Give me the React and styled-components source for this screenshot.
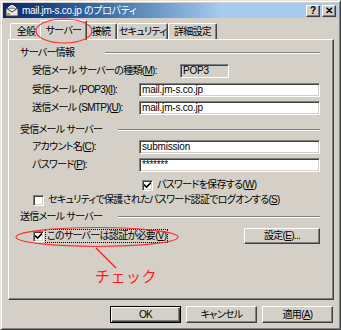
import React from "react";
import styled, { createGlobalStyle } from "styled-components";

const GlobalStyle = createGlobalStyle`
  html, body { margin: 0; padding: 0; background: #d4d0c8; }
  body {
    font-family: "Liberation Sans", "Noto Sans CJK JP", sans-serif;
    font-size: 10px;
    color: #000;
  }
`;

const Window = styled.div`
  position: relative;
  width: 341px;
  height: 330px;
  box-sizing: border-box;
  background: #d4d0c8;
  border: 1px solid;
  border-color: #e4e2dc #404040 #404040 #e4e2dc;
  box-shadow: inset 1px 1px 0 #fff, inset -1px -1px 0 #808080;
  padding: 2px;
  overflow: hidden;
  font-feature-settings: "palt" 1;
  letter-spacing: -0.7px;
`;

const TitleBar = styled.div`
  height: 15px;
  display: flex;
  align-items: center;
  padding: 0 2px;
  background: linear-gradient(90deg, #0a246a 0%, #3a6ea5 30%, #a6caf0 65%, #a6caf0 100%);
  color: #fff;
`;

const TitleText = styled.span`
  flex: 1;
  margin-left: 3px;
  line-height: 15px;
  letter-spacing: -0.3px;
  white-space: nowrap;
`;

const CapButton = styled.div`
  width: 12px;
  height: 10px;
  margin-left: ${(p) => p.$gap || 0}px;
  background: #d4d0c8;
  border: 1px solid;
  border-color: #fff #404040 #404040 #fff;
  box-shadow: inset -1px -1px 0 #808080;
  display: flex;
  align-items: center;
  justify-content: center;
  font-weight: bold;
  letter-spacing: 0;
  line-height: 10px;
  color: #000;
`;

const TabRow = styled.div`
  display: flex;
  align-items: flex-end;
  height: 21px;
  padding-left: 7px;
  position: relative;
  z-index: 2;
`;

const Tab = styled.div`
  position: relative;
  box-sizing: border-box;
  width: ${(p) => p.$w}px;
  height: ${(p) => (p.$active ? 20 : 16)}px;
  margin: 0 ${(p) => (p.$active ? -2 : 0)}px ${(p) => (p.$active ? -1 : 0)}px;
  z-index: ${(p) => (p.$active ? 2 : 1)};
  background: #d4d0c8;
  border-top: 1px solid #fff;
  border-left: 1px solid #fff;
  border-right: 1px solid #404040;
  border-radius: 2px 2px 0 0;
  box-shadow: inset -1px 0 0 #808080;
  display: flex;
  align-items: ${(p) => (p.$active ? "flex-start" : "center")};
  padding-top: ${(p) => (p.$active ? 3 : 0)}px;
  justify-content: center;
  line-height: 13px;
  white-space: nowrap;
`;

const Panel = styled.div`
  position: relative;
  margin: 0 4px 0 5px;
  height: 261px;
  box-sizing: border-box;
  border: 1px solid;
  border-color: #fff #404040 #404040 #fff;
  box-shadow: inset -1px -1px 0 #808080;
  padding: 0 0 0 11px;
  display: flex;
  flex-direction: column;
`;

const SectionHead = styled.div`
  display: flex;
  align-items: center;
  height: 12px;
  margin-top: ${(p) => p.$mt}px;
  margin-right: 13px;
  white-space: nowrap;
  line-height: 12px;
`;

const HeadText = styled.span`
  width: ${(p) => p.$w}px;
  flex: none;
`;

const Etch = styled.div`
  flex: 1;
  height: 0;
  border-top: 1px solid #808080;
  border-bottom: 1px solid #fff;
`;

const Row = styled.div`
  display: flex;
  align-items: center;
  margin-top: ${(p) => p.$mt}px;
  padding-left: ${(p) => p.$indent || 12}px;
  margin-right: 13px;
  white-space: nowrap;
`;

const Label = styled.span`
  width: ${(p) => p.$w}px;
  flex: none;
  line-height: 14px;
`;

const Field = styled.div`
  box-sizing: border-box;
  height: 14px;
  width: ${(p) => (p.$w ? p.$w + "px" : "auto")};
  flex: ${(p) => (p.$w ? "none" : 1)};
  background: ${(p) => (p.$readonly ? "#d4d0c8" : "#fff")};
  border: 1px solid;
  border-color: #808080 #fff #fff #808080;
  box-shadow: inset 1px 1px 0 #404040, inset -1px -1px 0 #d4d0c8;
  padding: 0 2px;
  letter-spacing: -0.2px;
  line-height: 12px;
`;

const Check = styled.span`
  box-sizing: border-box;
  width: 11px;
  height: 11px;
  flex: none;
  background: #fff;
  border: 1px solid;
  border-color: #808080 #fff #fff #808080;
  box-shadow: inset 1px 1px 0 #404040, inset -1px -1px 0 #d4d0c8;
  display: inline-flex;
  align-items: center;
  justify-content: center;
`;

const CheckText = styled.span`
  margin-left: ${(p) => p.$ml || 3}px;
  padding: 0 1px;
  line-height: 12px;
  outline: ${(p) => (p.$focus ? "1px dotted #000" : "none")};
`;

const Spacer = styled.div`
  flex: 1;
`;

const Button = styled.div`
  box-sizing: border-box;
  width: ${(p) => p.$w}px;
  height: ${(p) => p.$h}px;
  background: #d4d0c8;
  border: 1px solid;
  border-color: ${(p) => (p.$default ? "#000" : "#fff #404040 #404040 #fff")};
  box-shadow: ${(p) =>
    p.$default
      ? "inset 1px 1px 0 #fff, inset -1px -1px 0 #404040, inset -2px -2px 0 #808080"
      : "inset -1px -1px 0 #808080"};
  display: flex;
  align-items: center;
  justify-content: center;
  line-height: 12px;
  white-space: nowrap;
`;

const Footer = styled.div`
  display: flex;
  justify-content: flex-end;
  gap: 5px;
  margin: 6px 5px 0 0;
`;

const Overlay = styled.svg`
  position: absolute;
  left: 0;
  top: 0;
  pointer-events: none;
  z-index: 5;
`;

const Note = styled.span`
  position: absolute;
  left: 94px;
  top: 266px;
  z-index: 5;
  color: #ff1a1a;
  font-family: "Noto Sans CJK JP", sans-serif;
  font-size: 15px;
  line-height: 18px;
  letter-spacing: 0.5px;
  font-feature-settings: normal;
`;

const Ul = styled.span`
  text-decoration: underline;
`;

const CheckMark = () => (
  <svg width="7" height="7" viewBox="0 0 7 7">
    <path d="M0 2.5 L2.5 5 L7 0.5" stroke="#000" strokeWidth="1.6" fill="none" />
  </svg>
);

const AppIcon = () => (
  <svg width="14" height="13" viewBox="0 0 14 13">
    <rect x="1" y="4" width="12" height="8" fill="#e8e8e8" stroke="#404040" strokeWidth="1" />
    <path d="M1 4 L7 8 L13 4" stroke="#404040" fill="none" strokeWidth="1" />
    <path d="M3 4 Q7 -1 11 4" stroke="#fff" fill="#c0c0c0" strokeWidth="1" />
    <rect x="2" y="9" width="3" height="2" fill="#c8a000" />
  </svg>
);

export default function App() {
  return (
    <Window>
      <GlobalStyle />
      <TitleBar>
        <AppIcon />
        <TitleText>mail.jm-s.co.jp のプロパティ</TitleText>
        <CapButton>?</CapButton>
        <CapButton $gap={2}>✕</CapButton>
      </TitleBar>

      <TabRow>
        <Tab $w={32}>全般</Tab>
        <Tab $w={47} $active>サーバー</Tab>
        <Tab $w={32}>接続</Tab>
        <Tab $w={51}>セキュリティ</Tab>
        <Tab $w={49}>詳細設定</Tab>
      </TabRow>

      <Panel>
        <SectionHead $mt={7}>
          <HeadText $w={85}>サーバー情報</HeadText>
          <Etch />
        </SectionHead>
        <Row $mt={5}>
          <Label $w={148}>
            受信メール サーバーの種類(<Ul>M</Ul>):
          </Label>
          <Field $w={49} $readonly>
            POP3
          </Field>
        </Row>
        <Row $mt={5}>
          <Label $w={107}>
            受信メール (POP3)(<Ul>I</Ul>):
          </Label>
          <Field>mail.jm-s.co.jp</Field>
        </Row>
        <Row $mt={4}>
          <Label $w={107}>
            送信メール (SMTP)(<Ul>U</Ul>):
          </Label>
          <Field>mail.jm-s.co.jp</Field>
        </Row>

        <SectionHead $mt={9}>
          <HeadText $w={98}>受信メール サーバー</HeadText>
          <Etch />
        </SectionHead>
        <Row $mt={4}>
          <Label $w={107}>
            アカウント名(<Ul>C</Ul>):
          </Label>
          <Field>submission</Field>
        </Row>
        <Row $mt={4}>
          <Label $w={107}>
            パスワード(<Ul>P</Ul>):
          </Label>
          <Field>*******</Field>
        </Row>
        <Row $mt={7} $indent={122}>
          <Check>
            <CheckMark />
          </Check>
          <CheckText>
            パスワードを保存する(<Ul>W</Ul>)
          </CheckText>
        </Row>
        <Row $mt={3} $indent={13}>
          <Check />
          <CheckText>
            セキュリティで保護されたパスワード認証でログオンする(<Ul>S</Ul>)
          </CheckText>
        </Row>

        <SectionHead $mt={5}>
          <HeadText $w={98}>送信メール サーバー</HeadText>
          <Etch />
        </SectionHead>
        <Row $mt={5} $indent={13}>
          <Check>
            <CheckMark />
          </Check>
          <CheckText $focus $ml={2}>
            このサーバーは認証が必要(<Ul>V</Ul>)
          </CheckText>
          <Spacer />
          <Button $w={76} $h={16}>
            設定(<Ul>E</Ul>)...
          </Button>
        </Row>
      </Panel>

      <Footer>
        <Button $w={71} $h={17} $default>
          OK
        </Button>
        <Button $w={71} $h={17}>
          キャンセル
        </Button>
        <Button $w={71} $h={17}>
          適用(<Ul>A</Ul>)
        </Button>
      </Footer>

      <Overlay width="341" height="330" viewBox="0 0 341 330">
        <ellipse cx="63" cy="30" rx="28" ry="12" fill="none" stroke="#ff3030" strokeWidth="1.2" />
        <ellipse cx="96" cy="236" rx="81" ry="9.5" fill="none" stroke="#ff3030" strokeWidth="1.2" />
        <line x1="95" y1="247" x2="115" y2="267" stroke="#ff2020" strokeWidth="1.5" />
      </Overlay>
      <Note>チェック</Note>
    </Window>
  );
}
